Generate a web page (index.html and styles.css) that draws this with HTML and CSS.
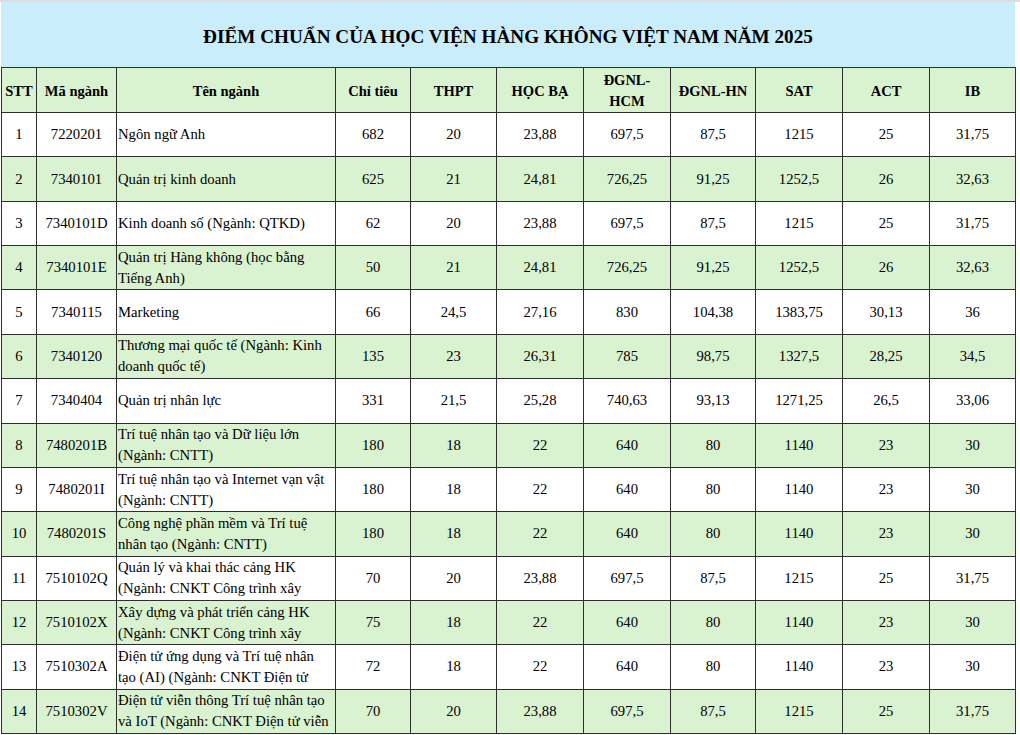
FILE: index.html
```html
<!DOCTYPE html>
<html lang="vi">
<head>
<meta charset="utf-8">
<title>Điểm chuẩn Học viện Hàng không Việt Nam 2025</title>
<link rel="stylesheet" href="styles.css">
</head>
<body>
<div class="sheet">
  <div class="title">ĐIỂM CHUẨN CỦA HỌC VIỆN HÀNG KHÔNG VIỆT NAM NĂM 2025</div>
  <table class="grid">
    <colgroup>
      <col class="c-stt"><col class="c-ma"><col class="c-ten"><col class="c-ct"><col class="c-thpt"><col class="c-hb"><col class="c-hcm"><col class="c-hn"><col class="c-sat"><col class="c-act"><col class="c-ib">
    </colgroup>
    <thead>
      <tr class="head">
        <th>STT</th><th>Mã ngành</th><th>Tên ngành</th><th>Chỉ tiêu</th><th>THPT</th><th>HỌC BẠ</th><th>ĐGNL-<br>HCM</th><th>ĐGNL-HN</th><th>SAT</th><th>ACT</th><th>IB</th>
      </tr>
    </thead>
    <tbody>
      <tr><td>1</td><td>7220201</td><td class="name"><div>Ngôn ngữ Anh</div></td><td>682</td><td>20</td><td>23,88</td><td>697,5</td><td>87,5</td><td>1215</td><td>25</td><td>31,75</td></tr>
      <tr class="alt"><td>2</td><td>7340101</td><td class="name"><div>Quản trị kinh doanh</div></td><td>625</td><td>21</td><td>24,81</td><td>726,25</td><td>91,25</td><td>1252,5</td><td>26</td><td>32,63</td></tr>
      <tr><td>3</td><td>7340101D</td><td class="name"><div>Kinh doanh số (Ngành: QTKD)</div></td><td>62</td><td>20</td><td>23,88</td><td>697,5</td><td>87,5</td><td>1215</td><td>25</td><td>31,75</td></tr>
      <tr class="alt"><td>4</td><td>7340101E</td><td class="name"><div>Quản trị Hàng không (học bằng<br>Tiếng Anh)</div></td><td>50</td><td>21</td><td>24,81</td><td>726,25</td><td>91,25</td><td>1252,5</td><td>26</td><td>32,63</td></tr>
      <tr><td>5</td><td>7340115</td><td class="name"><div>Marketing</div></td><td>66</td><td>24,5</td><td>27,16</td><td>830</td><td>104,38</td><td>1383,75</td><td>30,13</td><td>36</td></tr>
      <tr class="alt"><td>6</td><td>7340120</td><td class="name"><div>Thương mại quốc tế (Ngành: Kinh<br>doanh quốc tế)</div></td><td>135</td><td>23</td><td>26,31</td><td>785</td><td>98,75</td><td>1327,5</td><td>28,25</td><td>34,5</td></tr>
      <tr><td>7</td><td>7340404</td><td class="name"><div>Quản trị nhân lực</div></td><td>331</td><td>21,5</td><td>25,28</td><td>740,63</td><td>93,13</td><td>1271,25</td><td>26,5</td><td>33,06</td></tr>
      <tr class="alt"><td>8</td><td>7480201B</td><td class="name"><div>Trí tuệ nhân tạo và Dữ liệu lớn<br>(Ngành: CNTT)</div></td><td>180</td><td>18</td><td>22</td><td>640</td><td>80</td><td>1140</td><td>23</td><td>30</td></tr>
      <tr><td>9</td><td>7480201I</td><td class="name"><div>Trí tuệ nhân tạo và Internet vạn vật<br>(Ngành: CNTT)</div></td><td>180</td><td>18</td><td>22</td><td>640</td><td>80</td><td>1140</td><td>23</td><td>30</td></tr>
      <tr class="alt"><td>10</td><td>7480201S</td><td class="name"><div>Công nghệ phần mềm và Trí tuệ<br>nhân tạo (Ngành: CNTT)</div></td><td>180</td><td>18</td><td>22</td><td>640</td><td>80</td><td>1140</td><td>23</td><td>30</td></tr>
      <tr><td>11</td><td>7510102Q</td><td class="name"><div>Quản lý và khai thác cảng HK<br>(Ngành: CNKT Công trình xây</div></td><td>70</td><td>20</td><td>23,88</td><td>697,5</td><td>87,5</td><td>1215</td><td>25</td><td>31,75</td></tr>
      <tr class="alt"><td>12</td><td>7510102X</td><td class="name"><div>Xây dựng và phát triển cảng HK<br>(Ngành: CNKT Công trình xây</div></td><td>75</td><td>18</td><td>22</td><td>640</td><td>80</td><td>1140</td><td>23</td><td>30</td></tr>
      <tr><td>13</td><td>7510302A</td><td class="name"><div>Điện tử ứng dụng và Trí tuệ nhân<br>tạo (AI) (Ngành: CNKT Điện tử</div></td><td>72</td><td>18</td><td>22</td><td>640</td><td>80</td><td>1140</td><td>23</td><td>30</td></tr>
      <tr class="alt"><td>14</td><td>7510302V</td><td class="name"><div>Điện tử viễn thông Trí tuệ nhân tạo<br>và IoT (Ngành: CNKT Điện tử viễn</div></td><td>70</td><td>20</td><td>23,88</td><td>697,5</td><td>87,5</td><td>1215</td><td>25</td><td>31,75</td></tr>
    </tbody>
  </table>
</div>
</body>
</html>
```

FILE: styles.css
```css
html, body {
  margin: 0;
  padding: 0;
  background: #ffffff;
}

body {
  font-family: "Liberation Serif", "Times New Roman", serif;
  color: #000000;
  border-top: 2px solid #dedede;
}

.sheet {
  width: 1014px;
  margin-left: 1px;
}

.title {
  height: 65px;
  background: #caedfb;
  display: flex;
  align-items: center;
  justify-content: center;
  font-weight: bold;
  font-size: 19.2px;
  padding-top: 4px;
  box-sizing: border-box;
}

.grid {
  width: 1014px;
  table-layout: fixed;
  border-collapse: collapse;
  font-size: 14.7px;
}

.c-stt { width: 35px; }
.c-ma { width: 80px; }
.c-ten { width: 219px; }
.c-ct { width: 75px; }
.c-thpt { width: 86px; }
.c-hb { width: 87px; }
.c-hcm { width: 87px; }
.c-hn { width: 85px; }
.c-sat { width: 87px; }
.c-act { width: 87px; }
.c-ib { width: 86px; }

.grid th,
.grid td {
  border: 1px solid #2e2e2e;
  padding: 0;
  text-align: center;
  vertical-align: middle;
  line-height: 21px;
}

.head {
  height: 45px;
  background: #d9f2d0;
}

.head th {
  font-weight: bold;
  font-size: 14.5px;
  padding-top: 2px;
}

tbody tr {
  height: 44.36px;
  background: #ffffff;
}

tbody tr.alt {
  background: #d9f2d0;
}

.grid td.name {
  text-align: left;
  padding-left: 1px;
}

.name div {
  max-height: 42px;
  overflow: hidden;
  white-space: nowrap;
}
```
